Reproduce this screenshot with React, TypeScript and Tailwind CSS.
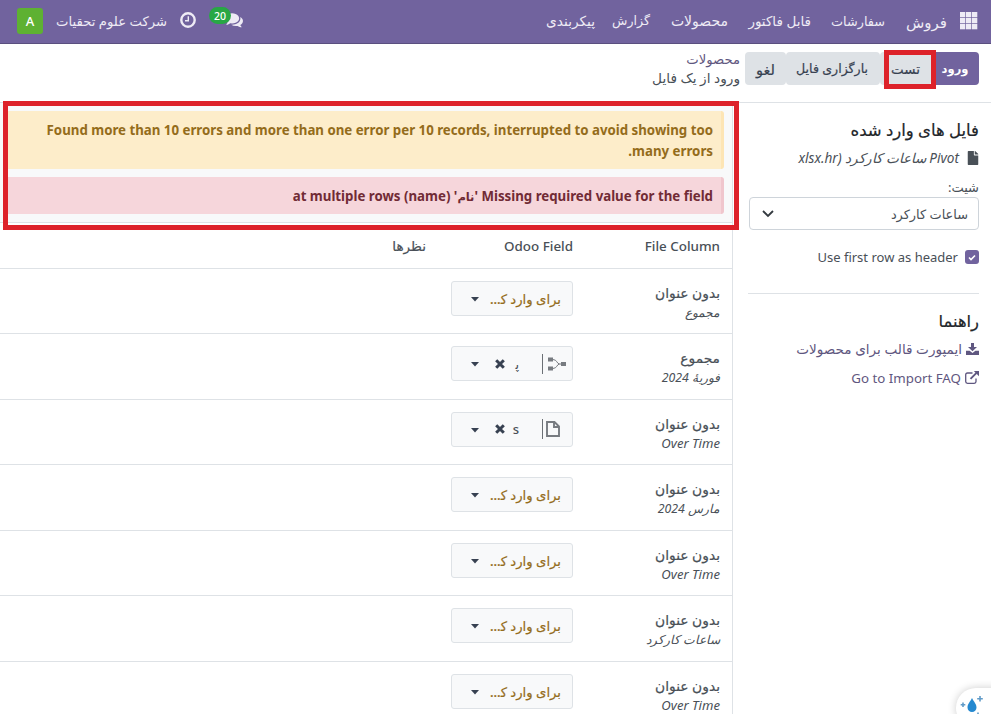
import type { ReactNode } from "react";
import { FaFile } from "react-icons/fa";

const GridIcon = () => (
  <svg width="18" height="18" viewBox="0 0 18 18" fill="#eeebf5" className="mt-px shrink-0">
    {[0, 6, 12].map((y) => [0, 6, 12].map((x) => <rect key={`${x}-${y}`} x={x} y={y} width="5.3" height="5.3" />))}
  </svg>
);

const ClockIcon = () => (
  <svg width="16" height="16" viewBox="0 0 16 16" fill="none" stroke="#eeebf5" className="shrink-0">
    <circle cx="8" cy="8" r="6.7" strokeWidth="2.4" />
    <path d="M8.3 4.2v4.6H5" strokeWidth="1.4" />
  </svg>
);

const CommentsIcon = () => (
  <svg width="18" height="16" viewBox="0 0 1792 1600" fill="#eeebf5" className="shrink-0">
    <path d="M1408 640q0 139-94 257t-256.500 186.500-353.500 68.500q-86 0-176-16-124 88-278 128-36 9-86 16h-3q-11 0-20.500-8t-11.500-21q-1-3-1-6.500t.5-6.500 2-6l2.500-5 3.500-5.500 4-5 4.500-5 4-4.500q5-6 23-25t26-29.500 22.500-29 25-38.500 20.500-44q-124-72-195-177t-71-224q0-139 94-257t256.500-186.500 353.500-68.500 353.500 68.500 256.500 186.500 94 257zm384 256q0 120-71 224.500t-195 176.500q10 24 20.500 44t25 38.500 22.500 29 26 29.500 23 25q1 1 4 4.500t4.500 5 4 5 3.500 5.500l2.500 5 2 6 .5 6.500-1 6.500q-3 14-13 22t-22 7q-50-7-86-16-154-40-278-128-90 16-176 16-271 0-472-132 58 4 88 4 161 0 309-45t264-129q125-92 192-212t67-254q0-77-23-152 129 71 204 178t75 230z" />
  </svg>
);

const DownloadIcon = () => (
  <svg width="13" height="12" viewBox="0 0 13 12" fill="#5f5780" className="shrink-0">
    <path d="M5 0h3v4h3L6.500 8.200 2 4h3z" />
    <path d="M0 7.800h3.600L6.500 10l2.900-2.200H13V12H0z" />
  </svg>
);

const CloseIcon = () => (
  <svg width="10" height="10" viewBox="0 0 10 10" stroke="#374151" strokeWidth="3" className="shrink-0">
    <path d="M1.200 1.200l7.600 7.600M8.800 1.200L1.200 8.800" />
  </svg>
);

const Caret = () => (
  <svg width="8" height="5" viewBox="0 0 8 5" fill="#374151" className="mt-[2px] shrink-0">
    <path d="M0 0h8L4 4.500z" />
  </svg>
);

const RelationIcon = () => (
  <svg width="18" height="14" viewBox="0 0 18 14" fill="#777b80" className="shrink-0">
    <rect x="0" y="0.500" width="5" height="4" />
    <rect x="0" y="9.500" width="5" height="4" />
    <rect x="13" y="5" width="5" height="4" />
    <path d="M5 2.500c4 0 4 4.500 6.500 4.500H13M5 11.500c4 0 4-4.500 6.500-4.500" fill="none" stroke="#777b80" />
  </svg>
);

const PageIcon = () => (
  <svg width="14" height="16" viewBox="0 0 14 16" fill="none" stroke="#777b80" strokeWidth="1.900" className="shrink-0">
    <path d="M1 1h7.500L13 5.500V15H1zM8 1v5h5" />
  </svg>
);

const ExternalIcon = () => (
  <svg width="14" height="13" viewBox="0 0 14 13" fill="none" stroke="#5f5780" className="shrink-0">
    <path d="M7.500 2H2.500Q.7 2 .7 3.800V10.500Q.7 12.300 2.500 12.300H9.200Q11 12.300 11 10.500V7.500" strokeWidth="1.300" />
    <path d="M5.500 7.800L11.500 1.800" strokeWidth="1.900" />
    <path d="M8.800 0H14v5.200z" fill="#5f5780" stroke="none" />
  </svg>
);

type Row = { title: string; sub: string; kind: "none" | "relation" | "page" };

const rows: Row[] = [
  { title: "بدون عنوان", sub: "مجموع", kind: "none" },
  { title: "مجموع", sub: "فوریهٔ 2024", kind: "relation" },
  { title: "بدون عنوان", sub: "Over Time", kind: "page" },
  { title: "بدون عنوان", sub: "مارس 2024", kind: "none" },
  { title: "بدون عنوان", sub: "Over Time", kind: "none" },
  { title: "بدون عنوان", sub: "ساعات کارکرد", kind: "none" },
  { title: "بدون عنوان", sub: "Over Time", kind: "none" },
];

function FieldSelect({ kind }: { kind: Row["kind"] }) {
  return (
    <div className="flex h-[35px] w-[122px] items-center rounded-[3px] border border-[#dee2e6] bg-[#f8f9fa]">
      {kind === "none" ? (
        <>
          <span className="ms-[11px] w-[73px] whitespace-nowrap pt-px text-[13.2px] font-medium text-[#946c1b] [-webkit-text-stroke:0.2px]">{"برای وارد ک\u200d..."}</span>
          <span className="ms-[9px]"><Caret /></span>
        </>
      ) : (
        <>
          <span className="flex w-[30px] items-center justify-between">
            <span className={kind === "relation" ? "ms-[6px]" : "ms-[12px]"}>{kind === "relation" ? <RelationIcon /> : <PageIcon />}</span>
            <span className="h-5 w-px bg-[#6b7075]" />
          </span>
          <span className="ms-[23px] w-[8px] text-[13px] font-medium leading-5 text-[#495057]">{kind === "relation" ? "پ\u200d" : "s"}</span>
          <span className="ms-[6px]"><CloseIcon /></span>
          <span className="ms-[16px]"><Caret /></span>
        </>
      )}
    </div>
  );
}

function Button({ children, className }: { children: ReactNode; className: string }) {
  return <button className={`flex h-[33px] shrink-0 items-center justify-center whitespace-nowrap rounded-[4px] ${className}`}>{children}</button>;
}

export default function App() {
  return (
    <div dir="rtl" className="relative flex h-[714px] w-[991px] flex-col overflow-hidden bg-white font-['Noto_Sans','DejaVu_Sans',sans-serif] text-[13px] leading-5 text-[#495057]">
      <header className="flex h-11 shrink-0 items-center border-b border-[#5a4f7f] bg-[#71639e] pb-[3px] ps-[13px] text-[#eeebf5]">
        <GridIcon />
        <span className="ms-[13px] w-[41px] whitespace-nowrap pt-[4px] text-[15px]">فروش</span>
        <nav className="flex whitespace-nowrap pt-[2px]">
          <span className="ms-[21px] w-[54px] text-[12.8px]">سفارشات</span>
          <span className="ms-[20px] w-[63px] text-[13.5px]">قابل فاکتور</span>
          <span className="ms-[20px] w-[58px] text-[14px]">محصولات</span>
          <span className="ms-[20px] w-[36px] text-[12.6px]">گزارش</span>
          <span className="ms-[19px] w-[50px] text-[13.7px]">پیکربندی</span>
        </nav>
        <div className="me-[17px] ms-auto flex items-center">
          <span className="relative flex"><CommentsIcon />
            <span className="absolute -top-[5px] left-[-16px] flex h-[17px] w-[22px] items-center justify-center rounded-full bg-[#28a745] text-[10.5px] font-medium text-white">20</span>
          </span>
          <span className="ms-[29px]"><ClockIcon /></span>
          <span className="ms-[13px] w-[111px] whitespace-nowrap pt-px text-[13.2px]">شرکت علوم تحقیات</span>
          <span className="ms-[13px] mt-px flex size-[26px] items-center justify-center rounded-[3px] bg-[#5eb132] text-[13px] font-medium text-white">A</span>
        </div>
      </header>

      <div className="flex h-[59px] shrink-0 items-start border-b border-[#dee2e6] ps-3 pt-2">
        <Button className="w-[48px] bg-[#71639e] text-[11.5px] font-bold text-white">ورود</Button>
        <Button className="w-[51px] bg-[#dee2e6] text-[13.4px] text-[#374151] [-webkit-text-stroke:0.2px]">تست</Button>
        <Button className="w-[94px] bg-[#dee2e6] ps-[2px] text-[12.6px] text-[#374151] [-webkit-text-stroke:0.2px]">بارگزاری فایل</Button>
        <Button className="w-[41px] bg-[#dee2e6] text-[14.5px] text-[#374151] [-webkit-text-stroke:0.2px]">لغو</Button>
        <div className="ms-[5px] flex flex-col whitespace-nowrap text-[13.7px] leading-[17px]">
          <span className="-mt-px h-[18px]  text-[13.2px] text-[#5f5780]">محصولات</span>
          <span>ورود از یک فایل</span>
        </div>
      </div>

      <div className="flex min-h-0 flex-1">
        <aside className="flex w-[258px] shrink-0 flex-col pe-4 ps-3 pt-[15px]">
          <h2 className="h-6 whitespace-nowrap text-[16.5px] leading-6 text-[#212529] [-webkit-text-stroke:0.2px]">فایل های وارد شده</h2>
          <div className="mt-[5px] flex items-center whitespace-nowrap">
            <FaFile className="h-[14px] w-3 shrink-0 text-[#495057]" />
            <span className="ms-2 pt-px text-[13.6px] italic">Pivot ساعات کارکرد (xlsx.hr</span>
          </div>
          <label className="mt-[9px] h-5">شیت:</label>
          <div className="flex h-[33px] w-[230px] items-center justify-between rounded-[4px] border border-[#ced4da] pe-3 ps-[10px]">
            <span className="text-[12.9px]">ساعات کارکرد</span>
            <svg width="12" height="8" viewBox="0 0 12 8" fill="none" stroke="#343a40" strokeWidth="1.800"><path d="M1 1l5 5 5-5" /></svg>
          </div>
          <div className="mt-[17px] flex items-center">
            <span className="flex size-[14px] items-center justify-center rounded-[3px] bg-[#71639e]">
              <svg width="8" height="7" viewBox="0 0 8 7" fill="none" stroke="white" strokeWidth="1.600"><path d="M1 3.500l2 2 4-4" /></svg>
            </span>
            <span className="ms-[7px]">Use first row as header</span>
          </div>
          <hr className="mt-[26px] w-[231px] border-[#dee2e6]" />
          <h2 className="mt-[15px] h-6 text-[16.4px] leading-6 text-[#212529] [-webkit-text-stroke:0.2px]">راهنما</h2>
          <a className="mt-[5px] flex items-center whitespace-nowrap text-[#5f5780]">
            <DownloadIcon />
            <span className="ms-[4px] pt-px text-[13.6px]">ایمپورت قالب برای محصولات</span>
          </a>
          <a className="mt-[8px] flex items-center text-[#5f5780]">
            <ExternalIcon />
            <span className="ms-[4px] pt-px text-[13.3px]">Go to Import FAQ</span>
          </a>
        </aside>

        <main className="flex w-[733px] flex-col overflow-hidden border-r border-[#dee2e6]">
          <section className="flex h-[120px] shrink-0 flex-col gap-2 border-b border-[#dee2e6] bg-[#f8f9fa] pe-1 ps-2 pt-2 text-[13.28px] font-bold">
            <div className="h-[58px] whitespace-nowrap rounded-r-[3px] border-r-[3px] border-[#fde5b5] bg-[#fdedca] ps-2 pt-[9px] leading-[21px] text-[#946c1b]">
              Found more than 10 errors and more than one error per 10 records, interrupted to avoid showing too<br />many errors.
            </div>
            <div className="h-[37px] whitespace-nowrap rounded-r-[3px] border-r-[3px] border-[#f0c6cd] bg-[#f6d6db] ps-2 pt-[9px] leading-[21px] text-[#712b35]">
              Missing required value for the field '<span className="text-[11.5px] leading-none">نام</span>' (name) at multiple rows
            </div>
          </section>
          <div className="flex h-[45.900px] shrink-0 items-center border-b border-[#dee2e6] ps-3 pt-px text-[13.4px] font-medium">
            <span className="w-[147px]">File Column</span>
            <span className="w-[147px]">Odoo Field</span>
            <span className="text-[13.6px] [-webkit-text-stroke:0.2px]">نظرها</span>
          </div>
          {rows.map((r, i) => (
            <div key={i} className="flex h-[65.500px] shrink-0 items-start border-b border-[#dee2e6] ps-3 pt-3">
              <div className="flex w-[147px] flex-col">
                <span className="h-[21px] text-[13.8px] leading-6 [-webkit-text-stroke:0.2px]">{r.title}</span>
                <span className={`h-5 italic leading-[21px] ${r.sub === "Over Time" ? "text-[13.1px]" : "text-[12.3px]"}`}>{r.sub}</span>
              </div>
              <FieldSelect kind={r.kind} />
            </div>
          ))}
        </main>
      </div>

      <div className="absolute left-[3px] top-[101px] h-[129px] w-[736px] border-[5px] border-[#dd222a]" />
      <div className="absolute left-[884px] top-[50px] h-[39px] w-[52px] border-[5px] border-[#dd222a]" />
      <div dir="ltr" className="absolute left-[956px] top-[688px] flex h-10 w-14 rounded-l-full bg-white shadow-[0_0_8px_rgba(0,0,0,0.2)]">
        <svg width="30" height="26" viewBox="0 0 30 26" fill="#2589d0" className="shrink-0">
          <path d="M16 10c2 4 4.500 6 4.500 9.500a4.500 4.500 0 0 1-9 0c0-3.500 2.500-5.500 4.500-9.500z" />
          <path d="M24 8v5.500M21.200 10.700h5.600M7 14.500v4.500M4.700 16.700h4.600M22 24.500v3" stroke="#619bc8" strokeWidth="1.600" />
        </svg>
      </div>
    </div>
  );
}
